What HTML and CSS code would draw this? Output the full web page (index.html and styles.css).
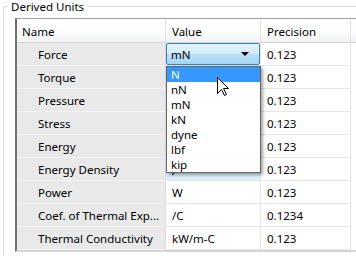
FILE: index.html
```html
<!DOCTYPE html>
<html lang="en">
<head>
    <meta charset="UTF-8">
    <title>Derived Units</title>
    <link rel="stylesheet" href="styles.css">
</head>
<body>
    <!-- group box holding the units grid -->
    <fieldset class="group">
        <legend>Derived Units</legend>
        <div class="grid">
            <table>
                <thead>
                    <tr>
                        <th class="col-name">Name</th>
                        <th class="col-value">Value</th>
                        <th class="col-prec">Precision</th>
                        <th class="col-fill"></th>
                    </tr>
                </thead>
                <tbody>
                    <tr>
                        <td class="name">Force</td>
                        <td class="value editing">
                            <div class="combo"><span>mN</span><span class="arrow"></span></div>
                            <!-- open drop-down list of the combo -->
                            <ul class="dropdown">
                                <li class="selected">N</li>
                                <li>nN</li>
                                <li>mN</li>
                                <li>kN</li>
                                <li>dyne</li>
                                <li>lbf</li>
                                <li>kip</li>
                            </ul>
                            <svg class="cursor" width="13" height="20" viewBox="0 0 13 20">
                                <path d="M0.5 0.5 L0.5 16.5 L4.5 12.5 L7.5 18.5 L9.5 17.5 L6.5 11.5 L11.5 11.5 Z" fill="#fff" stroke="#000" stroke-width="1" stroke-linejoin="miter"/>
                            </svg>
                        </td>
                        <td>0.123</td>
                        <td class="fill"></td>
                    </tr>
                    <!-- values of these rows sit under the open list -->
                    <tr><td class="name">Torque</td><td class="value"></td><td>0.123</td><td class="fill"></td></tr>
                    <tr><td class="name">Pressure</td><td class="value"></td><td>0.123</td><td class="fill"></td></tr>
                    <tr><td class="name">Stress</td><td class="value"></td><td>0.123</td><td class="fill"></td></tr>
                    <tr><td class="name">Energy</td><td class="value"></td><td>0.123</td><td class="fill"></td></tr>
                    <tr><td class="name">Energy Density</td><td class="value current"><span class="peek">J/m^3</span></td><td>0.123</td><td class="fill"></td></tr>
                    <tr><td class="name">Power</td><td class="value">W</td><td>0.123</td><td class="fill"></td></tr>
                    <tr><td class="name">Coef. of Thermal Exp...</td><td class="value">/C</td><td>0.1234</td><td class="fill"></td></tr>
                    <tr><td class="name">Thermal Conductivity</td><td class="value">kW/m-C</td><td>0.123</td><td class="fill"></td></tr>
                </tbody>
            </table>
        </div>
    </fieldset>
</body>
</html>
```

FILE: styles.css
```css
* {
    margin: 0;
    padding: 0;
    box-sizing: border-box;
}

html, body {
    width: 356px;
    height: 256px;
    overflow: hidden;
    background-color: #fff;
}

body {
    font-family: "Noto Sans", sans-serif;
    font-size: 11.5px;
    color: #000;
}

/* the box runs on past the right and bottom edges of the window */
.group {
    margin-left: 3px;
    width: 353px;
    height: 256px;
    border: 1px solid #d5dfe5;
    border-right: none;
    border-bottom: none;
    border-radius: 3px 0 0 0;
    padding: 5px 0 0 4px;
}

.group legend {
    padding: 0 3px;
    line-height: 13px;
}

.grid {
    margin-left: 7px;
    width: 341px;
    border-top: 1px solid #a0a0a0;
    border-left: 2px solid #707070;
    border-bottom: 2px solid #d6d6d6;
}

table {
    border-collapse: separate;
    border-spacing: 0;
    table-layout: fixed;
    width: 339px;
}

th {
    height: 24px;
    padding: 2px 0 0 6px;
    text-align: left;
    font-weight: normal;
    background: linear-gradient(#ffffff 0%, #ffffff 45%, #f1f2f4 100%);
    border-bottom: 1px solid #d5d5d5;
    border-right: 1px solid #e2e2e2;
}

th.col-name {
    width: 149px;
    padding-left: 5px;
}

th.col-value {
    width: 95px;
}

th.col-prec {
    width: 90px;
}

th.col-fill {
    border-right: none;
}

td {
    height: 23px;
    padding: 0 0 0 6px;
    white-space: nowrap;
    overflow: hidden;
    border-bottom: 1px solid #e6e6e6;
    border-right: 1px solid #e6e6e6;
}

td.name {
    padding-left: 21px;
    background-color: #e9e9e9;
    border-bottom-color: #f3f3f3;
    border-right-color: #d9d9d9;
}

td.current {
    background-color: #dbeefb;
}

/* only the lower part of this value shows below the list */
td.current .peek {
    display: block;
    height: 22px;
    line-height: 22px;
    clip-path: inset(8px 0 0 0);
}

td.fill {
    border: none;
}

td.editing {
    position: relative;
    overflow: visible;
    padding: 0;
}

.combo {
    height: 22px;
    display: flex;
    align-items: center;
    justify-content: space-between;
    padding-left: 4px;
    border: 1px solid #3c7fb1;
    border-radius: 2px;
    background: linear-gradient(#e3f3fc 0%, #d3ecfb 48%, #b9e0f8 52%, #a3d4f3 100%);
}

.combo .arrow {
    width: 0;
    height: 0;
    margin-right: 10px;
    border-left: 4px solid transparent;
    border-right: 4px solid transparent;
    border-top: 4px solid #000;
}

.dropdown {
    position: absolute;
    top: 23px;
    left: 0;
    width: 95px;
    list-style: none;
    background-color: #fff;
    border: 1px solid #646464;
    box-shadow: 2px 2px 3px rgba(0, 0, 0, 0.35);
    z-index: 2;
}

.dropdown li {
    height: 15px;
    line-height: 15px;
    padding-left: 4px;
}

.dropdown li.selected {
    background-color: #3399ff;
    color: #fff;
}

.cursor {
    position: absolute;
    left: 51px;
    top: 34px;
    z-index: 3;
}
```
